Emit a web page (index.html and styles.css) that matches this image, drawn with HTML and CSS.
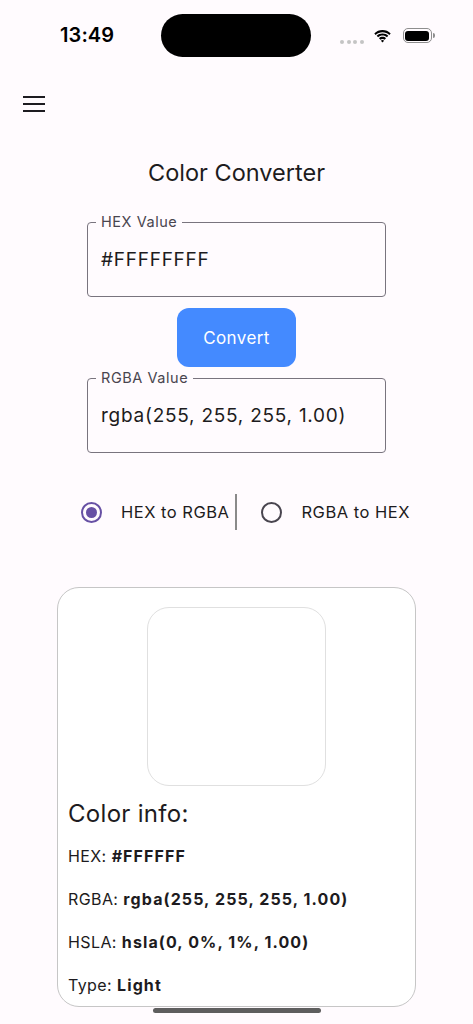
FILE: index.html
```html
<!DOCTYPE html>
<html lang="en">
<head>
<meta charset="utf-8">
<meta name="viewport" content="width=device-width, initial-scale=1">
<title>Color Converter</title>
<link rel="stylesheet" href="styles.css">
</head>
<body>
<div class="screen">
  <div class="status">
    <span class="time">13:49</span>
    <span class="island"></span>
    <span class="status-icons">
      <span class="dots"><i></i><i></i><i></i><i></i></span>
      <svg class="wifi" width="19" height="14" viewBox="0 0 19 14">
        <path d="M9.5 3.2c2.6 0 5 1 6.8 2.7l1.4-1.5C15.5 2.3 12.6 1.1 9.5 1.1S3.5 2.3 1.3 4.4l1.4 1.5C4.5 4.2 6.9 3.2 9.5 3.2z" fill="#000"/>
        <path d="M9.5 6.6c1.7 0 3.2.6 4.4 1.7l1.4-1.5C13.8 5.4 11.7 4.5 9.5 4.5S5.2 5.4 3.7 6.8l1.4 1.5c1.2-1.1 2.7-1.7 4.4-1.7z" fill="#000"/>
        <path d="M9.5 9.9c.8 0 1.5.3 2.1.8l1.4-1.5c-.9-.9-2.2-1.4-3.5-1.4S6.9 8.3 6 9.2l1.4 1.5c.6-.5 1.3-.8 2.1-.8z" fill="#000"/>
        <path d="M9.5 13.4l1.6-1.7c-.4-.4-1-.6-1.6-.6s-1.2.2-1.6.6z" fill="#000"/>
      </svg>
      <span class="battery"><span class="battery-body"><span class="battery-fill"></span></span><span class="battery-cap"></span></span>
    </span>
  </div>

  <div class="appbar">
    <button class="menu" aria-label="Menu"><span></span><span></span><span></span></button>
  </div>

  <main class="content">
    <h1 class="title">Color Converter</h1>

    <div class="field">
      <span class="field-label">HEX Value</span>
      <span class="field-value">#FFFFFFFF</span>
    </div>

    <button class="convert">Convert</button>

    <div class="field">
      <span class="field-label">RGBA Value</span>
      <span class="field-value">rgba(255, 255, 255, 1.00)</span>
    </div>

    <div class="modes">
      <label class="mode"><span class="radio checked"></span><span class="mode-text">HEX to RGBA</span></label>
      <span class="divider"></span>
      <label class="mode"><span class="radio"></span><span class="mode-text">RGBA to HEX</span></label>
    </div>

    <section class="card">
      <div class="swatch"></div>
      <h2 class="info-title">Color info:</h2>
      <p class="info-row">HEX: <b>#FFFFFF</b></p>
      <p class="info-row">RGBA: <b>rgba(255, 255, 255, 1.00)</b></p>
      <p class="info-row">HSLA: <b>hsla(0, 0%, 1%, 1.00)</b></p>
      <p class="info-row">Type: <b>Light</b></p>
    </section>
  </main>

  <div class="home-indicator"></div>
</div>
</body>
</html>
```

FILE: styles.css
```css
* { box-sizing: border-box; }

html, body {
  margin: 0;
  padding: 0;
  background: #fffbfe;
}

body {
  font-family: Inter, "Noto Sans", Roboto, sans-serif;
  color: #1d1b20;
}

.screen {
  position: relative;
  width: 473px;
  min-height: 1024px;
  overflow: hidden;
}

/* status bar */
.status {
  height: 76px;
  padding: 14px 0 0 0;
  display: flex;
  align-items: flex-start;
}

.time {
  width: 161px;
  height: 43px;
  line-height: 43px;
  padding-left: 60px;
  font-size: 20px;
  font-weight: 600;
  color: #000;
  letter-spacing: 0.1px;
}

.island {
  width: 150px;
  height: 43px;
  border-radius: 22px;
  background: #000;
}

.status-icons {
  height: 43px;
  display: flex;
  align-items: center;
  padding-left: 29px;
}

.dots {
  display: flex;
  gap: 2.5px;
  margin-top: 12px;
}

.dots i {
  width: 4px;
  height: 4px;
  border-radius: 50%;
  background: #c4c4c4;
  display: block;
}

.wifi {
  margin-left: 9px;
}

.battery {
  display: flex;
  align-items: center;
  margin-left: 11px;
}

.battery-body {
  width: 29px;
  height: 15px;
  border: 1.5px solid #8e8e8e;
  border-radius: 5px;
  padding: 1.5px;
  display: block;
}

.battery-fill {
  display: block;
  width: 100%;
  height: 100%;
  background: #000;
  border-radius: 3px;
}

.battery-cap {
  width: 2px;
  height: 5px;
  margin-left: 1px;
  border-radius: 0 2px 2px 0;
  background: #8e8e8e;
}

/* app bar */
.appbar {
  height: 56px;
  display: flex;
  align-items: center;
  padding-left: 23px;
}

.menu {
  border: 0;
  background: none;
  padding: 0;
  width: 22px;
  height: 16px;
  display: flex;
  flex-direction: column;
  justify-content: space-between;
}

.menu span {
  display: block;
  width: 22px;
  height: 2px;
  background: #1d1b20;
}

/* content */
.content {
  display: flex;
  flex-direction: column;
  align-items: center;
}

.title {
  margin: 25px 0 0 0;
  font-size: 23.5px;
  line-height: 32px;
  font-weight: 400;
  color: #1d1b20;
}

.field {
  position: relative;
  margin-top: 33px;
  width: 299px;
  height: 75px;
  border: 1px solid #79747e;
  border-radius: 4px;
  display: flex;
  align-items: center;
  padding: 0 13px;
}

.field-label {
  position: absolute;
  top: -10px;
  left: 8px;
  padding: 0 5px;
  background: #fffbfe;
  font-size: 14.5px;
  line-height: 18px;
  color: #49454f;
  letter-spacing: 0.55px;
}

.field-value {
  font-size: 19px;
  line-height: 24px;
  color: #1d1b20;
  letter-spacing: 0.75px;
  padding-top: 1px;
}

.convert {
  margin-top: 11px;
  width: 119px;
  height: 59px;
  border: 0;
  border-radius: 12px;
  background: #448aff;
  color: #fff;
  font-family: inherit;
  font-size: 17px;
  letter-spacing: 0.4px;
}

.convert + .field {
  margin-top: 11px;
}

.modes {
  margin-top: 41px;
  align-self: flex-start;
  padding-left: 81px;
  height: 36px;
  display: flex;
  align-items: center;
}

.mode {
  display: flex;
  align-items: center;
}

.radio {
  width: 21px;
  height: 21px;
  border-radius: 50%;
  border: 2px solid #49454f;
  display: flex;
  align-items: center;
  justify-content: center;
}

.radio.checked {
  border-color: #6750a4;
}

.radio.checked::after {
  content: "";
  width: 11px;
  height: 11px;
  border-radius: 50%;
  background: #6750a4;
}

.mode-text {
  margin-left: 19px;
  font-size: 16.5px;
  letter-spacing: 0.5px;
  color: #1d1b20;
}

.divider {
  width: 2px;
  height: 36px;
  background: #8a8a8a;
  margin: 0 24px 0 6px;
}

/* card */
.card {
  margin-top: 57px;
  width: 359px;
  height: 420px;
  border: 1px solid #c6c6c6;
  border-radius: 22px;
  background: #fff;
  padding: 19px 10px 0 10px;
  display: flex;
  flex-direction: column;
}

.swatch {
  align-self: center;
  width: 179px;
  height: 179px;
  border: 1px solid #e0e0e0;
  border-radius: 22px;
  background: #fff;
}

.info-title {
  margin: 14px 0 6px 0;
  font-size: 24px;
  line-height: 28px;
  font-weight: 400;
  letter-spacing: 0.3px;
  color: #1d1b20;
}

.info-row {
  margin: 0;
  height: 43px;
  display: flex;
  align-items: center;
  gap: 5px;
  font-size: 16px;
  letter-spacing: 0.4px;
  color: #1d1b20;
}

.info-row b {
  font-weight: 700;
  letter-spacing: 1.1px;
}

.home-indicator {
  position: absolute;
  left: 153px;
  top: 1008px;
  width: 168px;
  height: 5px;
  border-radius: 3px;
  background: #5e5e5e;
}
```
